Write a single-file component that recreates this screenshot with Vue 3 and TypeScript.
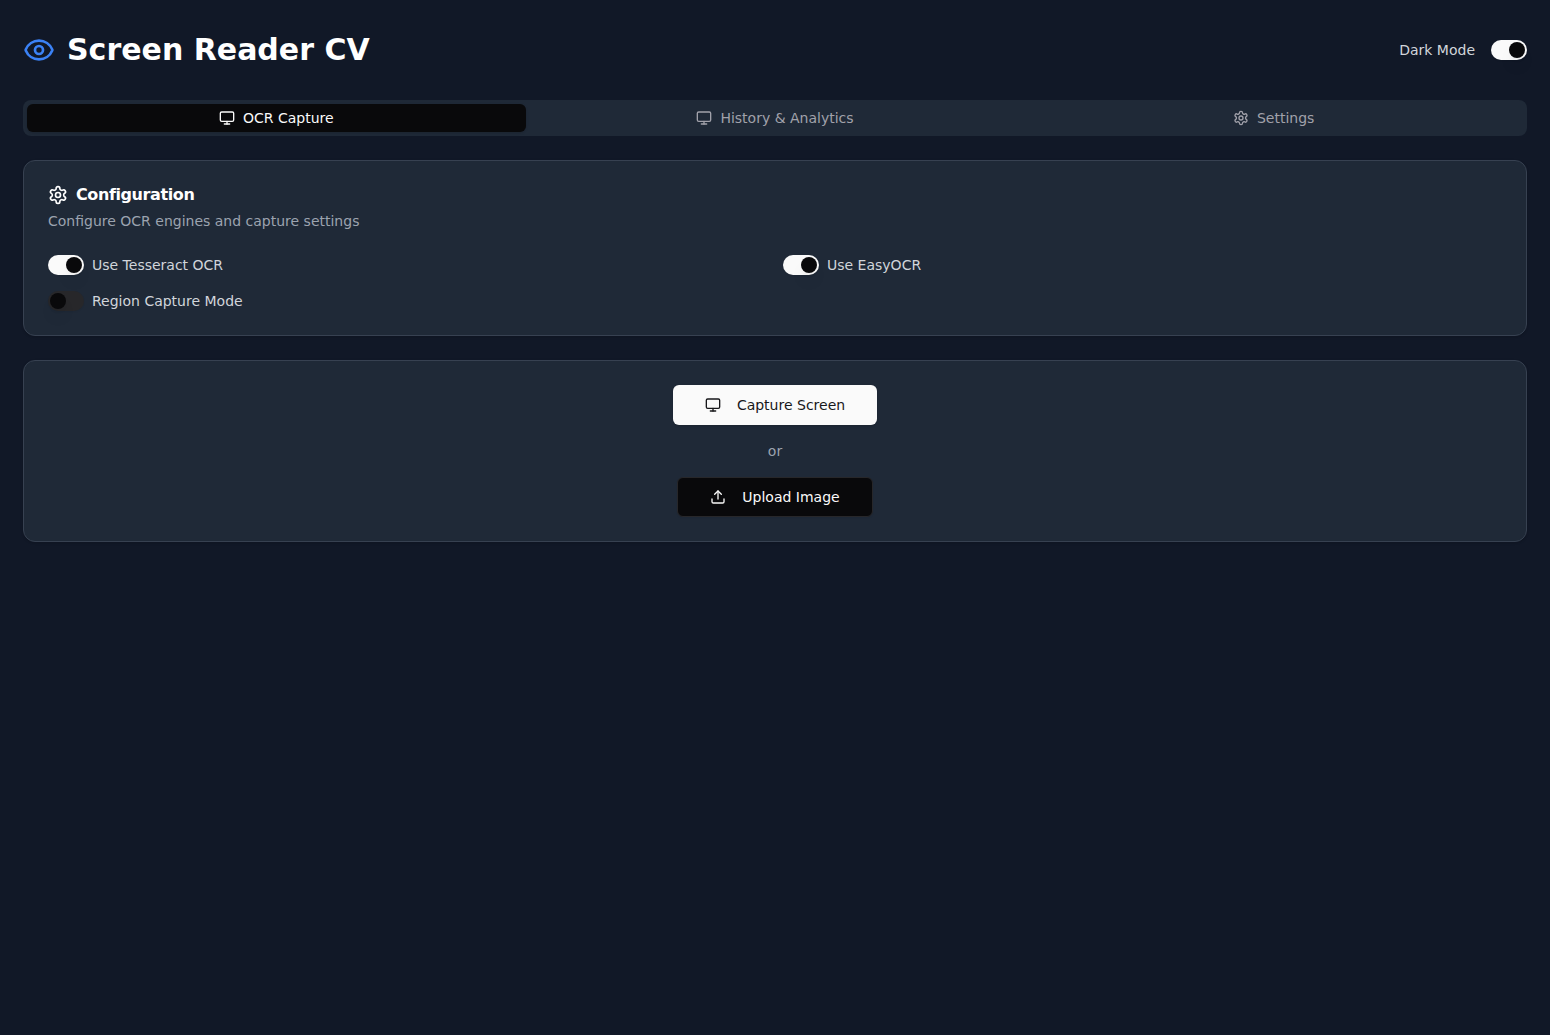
<script setup lang="ts">
import { reactive, ref } from 'vue'

type TabId = 'capture' | 'history' | 'settings'

const gear =
  'M12.22 2h-.44a2 2 0 0 0-2 2v.18a2 2 0 0 1-1 1.73l-.43.25a2 2 0 0 1-2 0l-.15-.08a2 2 0 0 0-2.73.73l-.22.38a2 2 0 0 0 .73 2.73l.15.1a2 2 0 0 1 1 1.72v.51a2 2 0 0 1-1 1.74l-.15.09a2 2 0 0 0-.73 2.73l.22.38a2 2 0 0 0 2.73.73l.15-.08a2 2 0 0 1 2 0l.43.25a2 2 0 0 1 1 1.73V20a2 2 0 0 0 2 2h.44a2 2 0 0 0 2-2v-.18a2 2 0 0 1 1-1.73l.43-.25a2 2 0 0 1 2 0l.15.08a2 2 0 0 0 2.73-.73l.22-.39a2 2 0 0 0-.73-2.73l-.15-.08a2 2 0 0 1-1-1.74v-.5a2 2 0 0 1 1-1.74l.15-.09a2 2 0 0 0 .73-2.73l-.22-.38a2 2 0 0 0-2.73-.73l-.15.08a2 2 0 0 1-2 0l-.43-.25a2 2 0 0 1-1-1.73V4a2 2 0 0 0-2-2z'

const tabs: { id: TabId; label: string }[] = [
  { id: 'capture', label: 'OCR Capture' },
  { id: 'history', label: 'History & Analytics' },
  { id: 'settings', label: 'Settings' },
]
const active = ref<TabId>('capture')
const dark = ref(true)
const options = reactive([
  { label: 'Use Tesseract OCR', on: true },
  { label: 'Use EasyOCR', on: true },
  { label: 'Region Capture Mode', on: false },
])
</script>

<template>
  <div class="page">
    <main class="container">
      <header class="header">
        <div class="brand">
          <svg class="icon eye" viewBox="0 0 24 24">
            <path d="M2.062 12.348a1 1 0 0 1 0-.696 10.75 10.75 0 0 1 19.876 0 1 1 0 0 1 0 .696 10.75 10.75 0 0 1-19.876 0" />
            <circle cx="12" cy="12" r="3" />
          </svg>
          <h1>Screen Reader CV</h1>
        </div>
        <div class="mode">
          <span class="label">Dark Mode</span>
          <button class="switch" :class="{ on: dark }" role="switch" :aria-checked="dark" aria-label="Dark Mode" @click="dark = !dark">
            <span class="thumb" />
          </button>
        </div>
      </header>

      <nav class="tabs">
        <button v-for="tab in tabs" :key="tab.id" class="tab" :class="{ active: active === tab.id }" @click="active = tab.id">
          <svg class="icon small" viewBox="0 0 24 24">
            <template v-if="tab.id === 'settings'">
              <path :d="gear" />
              <circle cx="12" cy="12" r="3" />
            </template>
            <template v-else>
              <rect width="20" height="14" x="2" y="3" rx="2" />
              <line x1="8" x2="16" y1="21" y2="21" />
              <line x1="12" x2="12" y1="17" y2="21" />
            </template>
          </svg>
          <span>{{ tab.label }}</span>
        </button>
      </nav>

      <section class="card">
        <div class="card-head">
          <h2>
            <svg class="icon medium" viewBox="0 0 24 24">
              <path :d="gear" />
              <circle cx="12" cy="12" r="3" />
            </svg>
            <span>Configuration</span>
          </h2>
          <p>Configure OCR engines and capture settings</p>
        </div>
        <div class="options">
          <div v-for="option in options" :key="option.label" class="option">
            <button class="switch" :class="{ on: option.on }" role="switch" :aria-checked="option.on" :aria-label="option.label" @click="option.on = !option.on">
              <span class="thumb" />
            </button>
            <span class="label">{{ option.label }}</span>
          </div>
        </div>
      </section>

      <section class="card actions">
        <button class="btn primary">
          <svg class="icon small" viewBox="0 0 24 24">
            <rect width="20" height="14" x="2" y="3" rx="2" />
            <line x1="8" x2="16" y1="21" y2="21" />
            <line x1="12" x2="12" y1="17" y2="21" />
          </svg>
          <span>Capture Screen</span>
        </button>
        <div class="or">or</div>
        <button class="btn outline">
          <svg class="icon small" viewBox="0 0 24 24">
            <path d="M21 15v4a2 2 0 0 1-2 2H5a2 2 0 0 1-2-2v-4" />
            <polyline points="17 8 12 3 7 8" />
            <line x1="12" x2="12" y1="3" y2="15" />
          </svg>
          <span>Upload Image</span>
        </button>
      </section>
    </main>
  </div>
</template>

<style>
body {
  background: #111827;
}
</style>

<style scoped>
.page,
.page * {
  box-sizing: border-box;
}
.page {
  min-height: 100vh;
  background: #111827;
  color: #fafafa;
  font-family: 'DejaVu Sans', sans-serif;
  font-size: 14px;
  line-height: 20px;
}
.container {
  max-width: 1536px;
  margin: 0 auto;
  padding: 32px 16px;
}
h1,
h2,
p {
  margin: 0;
}
button {
  border: 0;
  padding: 0;
  font: inherit;
  color: inherit;
  cursor: pointer;
}
.icon {
  flex: none;
  fill: none;
  stroke: currentColor;
  stroke-width: 2;
  stroke-linecap: round;
  stroke-linejoin: round;
}
.small {
  width: 16px;
  height: 16px;
}
.medium {
  width: 20px;
  height: 20px;
}
.eye {
  width: 32px;
  height: 32px;
  color: #3b82f6;
}
.header {
  display: flex;
  align-items: center;
  justify-content: space-between;
  margin-bottom: 32px;
}
.brand {
  display: flex;
  align-items: center;
  gap: 12px;
}
h1 {
  font-size: 30px;
  line-height: 36px;
  font-weight: 700;
  color: #fff;
}
.mode {
  display: flex;
  align-items: center;
  gap: 16px;
}
.label {
  color: #d1d5db;
}
.switch {
  flex: none;
  display: flex;
  align-items: center;
  width: 36px;
  height: 20px;
  padding: 2px;
  border-radius: 10px;
  background: #27272a;
  box-shadow: 0 1px 2px rgba(0, 0, 0, 0.05);
}
.switch.on {
  background: #fafafa;
}
.thumb {
  width: 16px;
  height: 16px;
  border-radius: 50%;
  background: #09090b;
  box-shadow: 0 10px 15px -3px rgba(0, 0, 0, 0.1), 0 4px 6px -4px rgba(0, 0, 0, 0.1);
}
.switch.on .thumb {
  transform: translateX(16px);
}
.tabs {
  display: grid;
  grid-template-columns: repeat(3, 1fr);
  height: 36px;
  padding: 4px;
  border-radius: 8px;
  background: #1f2937;
  margin-bottom: 24px;
}
.tab {
  display: flex;
  align-items: center;
  justify-content: center;
  gap: 8px;
  border-radius: 6px;
  background: transparent;
  color: #a1a1aa;
}
.tab.active {
  background: #09090b;
  color: #fafafa;
  box-shadow: 0 1px 3px rgba(0, 0, 0, 0.1), 0 1px 2px -1px rgba(0, 0, 0, 0.1);
}
.card {
  padding: 24px;
  border: 1px solid #374151;
  border-radius: 12px;
  background: #1f2937;
  box-shadow: 0 1px 3px rgba(0, 0, 0, 0.1), 0 1px 2px -1px rgba(0, 0, 0, 0.1);
  margin-bottom: 24px;
}
.card-head {
  display: flex;
  flex-direction: column;
  gap: 6px;
  margin-bottom: 24px;
}
h2 {
  display: flex;
  align-items: center;
  gap: 8px;
  height: 20px;
  font-size: 16px;
  line-height: 16px;
  font-weight: 600;
  letter-spacing: -0.4px;
  color: #fff;
}
p,
.or {
  color: #9ca3af;
}
.options {
  display: grid;
  grid-template-columns: repeat(2, 1fr);
  gap: 16px;
}
.option {
  display: flex;
  align-items: center;
  gap: 8px;
}
.actions {
  display: flex;
  flex-direction: column;
  align-items: center;
  gap: 16px;
}
.btn {
  display: flex;
  align-items: center;
  gap: 16px;
  height: 40px;
  padding: 0 32px;
  border-radius: 6px;
}
.primary {
  background: #fafafa;
  color: #18181b;
  box-shadow: 0 1px 3px rgba(0, 0, 0, 0.1), 0 1px 2px -1px rgba(0, 0, 0, 0.1);
}
.outline {
  border: 1px solid #27272a;
  background: #09090b;
  color: #fafafa;
  box-shadow: 0 1px 2px rgba(0, 0, 0, 0.05);
}
</style>
